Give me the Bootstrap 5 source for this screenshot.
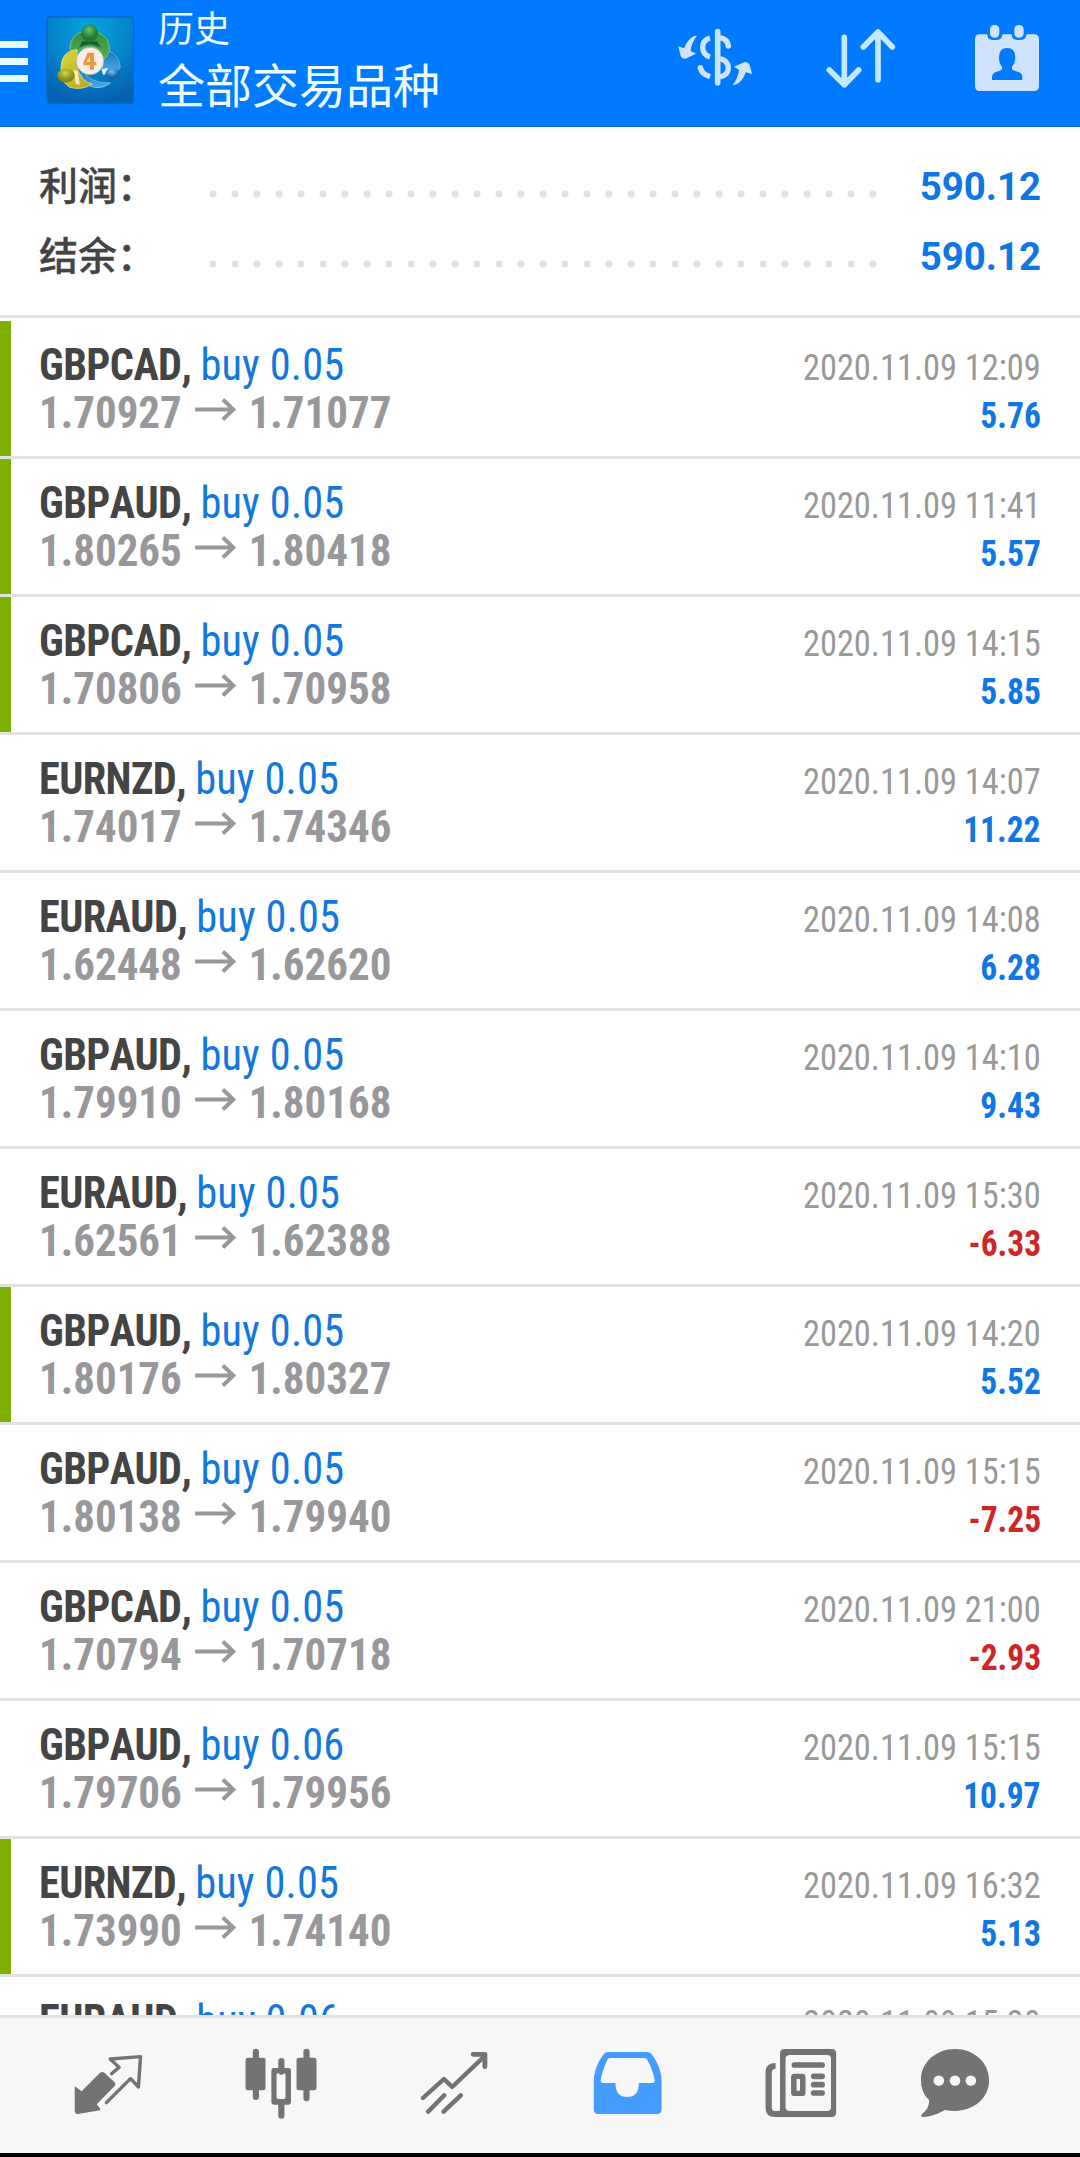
<!DOCTYPE html>
<html lang="zh-CN">
<head>
<meta charset="utf-8">
<meta name="viewport" content="width=device-width, initial-scale=1">
<title>历史</title>
<link rel="stylesheet" href="https://cdn.jsdelivr.net/npm/bootstrap@5.3.0/dist/css/bootstrap.min.css">
<style>
body{height:2157px;overflow:hidden;background:#fff;font-family:Roboto,"Noto Sans CJK SC",sans-serif;color:#444}
.topbar{height:127px;background:#007aff;border-bottom:2px solid #1a6cc4;color:#eefbff}
.burger{width:28px;margin-top:41px}
.burger i{display:block;height:7px;background:#e6fbff;margin-bottom:10px}
.applogo{width:88px;height:88px;margin:16px 0 0 18px}
.titles{margin-left:24px;font-family:"Noto Sans CJK SC",sans-serif}
.t-sub{font-size:36px;line-height:50px;margin-top:1px}
.t-main{font-size:47px;line-height:64px}
.summary{height:191px;border-bottom:3px solid #e2e2e2;padding:23px 39px 0 39px}
.sumline{height:70px}
.sumlabel{width:163px;margin-top:-4px;font:500 39px/70px "Noto Sans CJK SC",sans-serif;-webkit-text-stroke:.3px #444}
.dots{width:682px;height:8px;margin-top:17px;background:radial-gradient(circle at 11px 4px,#e0e0e0 3px,transparent 4px) 0 0/22px 8px repeat-x}
.sumval{font-weight:700;font-size:38.4px;color:#0f76e6;padding-top:4px}
.trades{height:1697px;padding-top:3px}
.trade{height:138px;border-bottom:3px solid #e2e2e2;padding:19.5px 39px 0 39px;font-family:"Roboto Condensed",Roboto,sans-serif;font-stretch:75%}
.won{box-shadow:inset 11px 0 #7fb000}
.tline{height:48px;line-height:48px;white-space:nowrap}
.tline+.tline{height:48.5px;line-height:48.5px}
.tline>:first-child{transform:scaleX(.94);transform-origin:0 0}
.tline>:last-child{transform:scaleX(.93);transform-origin:100% 0}
.sym{font-weight:700;font-size:45px;letter-spacing:-.6px;font-kerning:none}
.side{font-weight:400;color:#1377e0;letter-spacing:.2px}
.tline>.price{font-weight:700;font-size:45px;color:#98989b;transform:scaleX(.955)}
.arrow{width:45px;height:24px;margin:0 12px 7px 13px;vertical-align:baseline}
.when{font-size:37px;color:#999}
.gain,.loss{font-weight:700;font-size:37px;color:#0f76e6}
.tline>.gain,.tline>.loss{transform:scaleX(.905)}
.loss{color:#cc2626}
.tabs{height:138px;background:#f7f7f7;border-top:3px solid #e2e2e2}
.sysline{height:4px;background:#000}
</style>
<script src="https://cdn.jsdelivr.net/npm/bootstrap@5.3.0/dist/js/bootstrap.bundle.min.js"></script>
</head>
<body>
<svg width="0" height="0" class="position-absolute"><symbol id="arr" viewBox="0 0 44 24"><path d="M0 12.500H40M29 2.500L40 12.500L29 22.500" fill="none" stroke="#98989b" stroke-width="4"/></symbol></svg>
<header class="topbar d-flex align-items-start">
<div class="burger"><i></i><i></i><i></i></div>
<svg class="applogo" viewBox="137 46 264 264">
<defs>
<radialGradient id="bg" cx=".5" cy=".15" r=".85"><stop offset="0" stop-color="#08a3dc"/><stop offset=".55" stop-color="#0584cc"/><stop offset="1" stop-color="#0560ae"/></radialGradient>
<linearGradient id="gr" x2="0" y2="1"><stop offset="0" stop-color="#2f8f42"/><stop offset="1" stop-color="#55b04c"/></linearGradient>
<linearGradient id="ye" x2="1" y2="1"><stop offset="0" stop-color="#ded63a"/><stop offset="1" stop-color="#b3a41c"/></linearGradient>
<linearGradient id="bl" x2="0" y2="1"><stop offset="0" stop-color="#1b70b8"/><stop offset="1" stop-color="#4aaee8"/></linearGradient>
<radialGradient id="gb" cx=".45" cy=".3"><stop offset="0" stop-color="#6cc46a"/><stop offset="1" stop-color="#1f7a34"/></radialGradient>
<radialGradient id="yb" cx=".45" cy=".3"><stop offset="0" stop-color="#d0d448"/><stop offset="1" stop-color="#848e12"/></radialGradient>
<radialGradient id="bb" cx=".45" cy=".3"><stop offset="0" stop-color="#7cc8f0"/><stop offset="1" stop-color="#1467ae"/></radialGradient>
</defs>
<rect x="140" y="49" width="260" height="260" rx="10" fill="url(#bg)" stroke="#0b66c0" stroke-width="5"/>
<path d="M304 146Q357 152 360 200Q352 218 306 214Z" fill="url(#bl)" stroke="#6fb8e0" stroke-width="2"/>
<path d="M248 206Q262 248 331 247Q300 270 268 256Q250 246 242 222Z" fill="url(#bl)" stroke="#8fd0ee" stroke-width="2"/>
<path d="M208 146Q212 100 250 92L286 92Q330 108 328 152L308 182Q306 138 268 138Q240 140 226 160Z" fill="url(#gr)" stroke="#8ccb78" stroke-width="2.500"/>
<path d="M182 206Q180 152 230 146L232 204Q244 246 276 250Q244 270 208 260L184 238Z" fill="url(#ye)" stroke="#e6de80" stroke-width="2.500"/>
<path d="M221 208L226 250L238 252L232 212Z" fill="#fff" opacity=".75"/>
<path d="M304 206L322 202L322 220L308 222Z" fill="#e8f6ff"/>
<path d="M236 142Q268 120 302 142L290 122L246 122Z" fill="#1c5a38"/>
<ellipse cx="268" cy="98" rx="24" ry="25" fill="url(#gb)" stroke="#1f7a34" stroke-width="2"/>
<ellipse cx="197" cy="225" rx="26" ry="21" fill="url(#yb)"/>
<ellipse cx="336" cy="219" rx="21" ry="17" fill="url(#bb)"/>
<circle cx="269" cy="181" r="41" fill="#f6efe9" stroke="#b9aa90" stroke-width="2"/>
<path fill-rule="evenodd" d="M262 156H281V184H288V194H281V207H269V194H249V186ZM269 166L259 184H269Z" fill="#f0963c"/>
</svg>
<div class="titles flex-grow-1"><div class="t-sub">历史</div><div class="t-main">全部交易品种</div></div>
<svg width="440" height="125" viewBox="0 0 1320 375" fill="#cfe4fc">
<path d="M171 107Q158 106 144 123Q137 132 132 145L115 139L122 168Q126 178 136 176L168 161L152 153Q154 128 171 107Z"/>
<path d="M278 255Q294 254 306 239Q314 229 317 217L336 222L329 195Q324 184 314 186L282 200L297 209Q294 234 278 255Z"/>
<g fill="none" stroke="#cfe4fc" stroke-width="16"><path d="M233 95V248" stroke="#c6e6ff" stroke-width="17" stroke-linecap="round"/><path d="M210 114Q188 120 188 142Q188 164 210 171M181 202Q184 222 210 230M240 113Q264 118 265 139M240 176Q265 182 265 205Q265 225 240 231"/><g stroke-linecap="round"><path d="M265 137V138M181 203V204"/></g></g>
<g fill="none" stroke="#c6e8ff" stroke-width="17" stroke-linecap="round" stroke-linejoin="round"><path d="M613 112V254M568 210L613 254L656 210M714 239V96M670 141L714 96L757 141"/></g>
<path fill-rule="evenodd" d="M1020 103H1042Q1042 120 1058 120H1070Q1087 120 1087 103H1115Q1115 120 1132 120H1142Q1159 120 1159 103H1182Q1197 103 1197 118V258Q1197 273 1182 273H1020Q1005 273 1005 258V118Q1005 103 1020 103ZM1101 144Q1077 144 1077 172Q1077 192 1086 200V207Q1084 212 1070 215Q1056 219 1056 232V240H1147V232Q1147 219 1133 215Q1118 212 1116 207V200Q1126 190 1126 172Q1126 144 1101 144Z"/>
<rect x="1050" y="75" width="28" height="38" rx="13"/><rect x="1123" y="75" width="28" height="38" rx="13"/>
</svg>
</header>
<section class="summary">
<div class="sumline d-flex align-items-center"><span class="sumlabel">利润：</span><span class="dots"></span><span class="sumval ms-auto">590.12</span></div>
<div class="sumline d-flex align-items-center"><span class="sumlabel">结余：</span><span class="dots"></span><span class="sumval ms-auto">590.12</span></div>
</section>
<main class="trades overflow-hidden">
<div class="trade won"><div class="tline d-flex justify-content-between align-items-baseline"><span class="sym">GBPCAD, <span class="side">buy 0.05</span></span><span class="when">2020.11.09 12:09</span></div><div class="tline d-flex justify-content-between align-items-baseline"><span class="price">1.70927<svg class="arrow"><use href="#arr"/></svg>1.71077</span><span class="gain">5.76</span></div></div>
<div class="trade won"><div class="tline d-flex justify-content-between align-items-baseline"><span class="sym">GBPAUD, <span class="side">buy 0.05</span></span><span class="when">2020.11.09 11:41</span></div><div class="tline d-flex justify-content-between align-items-baseline"><span class="price">1.80265<svg class="arrow"><use href="#arr"/></svg>1.80418</span><span class="gain">5.57</span></div></div>
<div class="trade won"><div class="tline d-flex justify-content-between align-items-baseline"><span class="sym">GBPCAD, <span class="side">buy 0.05</span></span><span class="when">2020.11.09 14:15</span></div><div class="tline d-flex justify-content-between align-items-baseline"><span class="price">1.70806<svg class="arrow"><use href="#arr"/></svg>1.70958</span><span class="gain">5.85</span></div></div>
<div class="trade"><div class="tline d-flex justify-content-between align-items-baseline"><span class="sym">EURNZD, <span class="side">buy 0.05</span></span><span class="when">2020.11.09 14:07</span></div><div class="tline d-flex justify-content-between align-items-baseline"><span class="price">1.74017<svg class="arrow"><use href="#arr"/></svg>1.74346</span><span class="gain">11.22</span></div></div>
<div class="trade"><div class="tline d-flex justify-content-between align-items-baseline"><span class="sym">EURAUD, <span class="side">buy 0.05</span></span><span class="when">2020.11.09 14:08</span></div><div class="tline d-flex justify-content-between align-items-baseline"><span class="price">1.62448<svg class="arrow"><use href="#arr"/></svg>1.62620</span><span class="gain">6.28</span></div></div>
<div class="trade"><div class="tline d-flex justify-content-between align-items-baseline"><span class="sym">GBPAUD, <span class="side">buy 0.05</span></span><span class="when">2020.11.09 14:10</span></div><div class="tline d-flex justify-content-between align-items-baseline"><span class="price">1.79910<svg class="arrow"><use href="#arr"/></svg>1.80168</span><span class="gain">9.43</span></div></div>
<div class="trade"><div class="tline d-flex justify-content-between align-items-baseline"><span class="sym">EURAUD, <span class="side">buy 0.05</span></span><span class="when">2020.11.09 15:30</span></div><div class="tline d-flex justify-content-between align-items-baseline"><span class="price">1.62561<svg class="arrow"><use href="#arr"/></svg>1.62388</span><span class="loss">-6.33</span></div></div>
<div class="trade won"><div class="tline d-flex justify-content-between align-items-baseline"><span class="sym">GBPAUD, <span class="side">buy 0.05</span></span><span class="when">2020.11.09 14:20</span></div><div class="tline d-flex justify-content-between align-items-baseline"><span class="price">1.80176<svg class="arrow"><use href="#arr"/></svg>1.80327</span><span class="gain">5.52</span></div></div>
<div class="trade"><div class="tline d-flex justify-content-between align-items-baseline"><span class="sym">GBPAUD, <span class="side">buy 0.05</span></span><span class="when">2020.11.09 15:15</span></div><div class="tline d-flex justify-content-between align-items-baseline"><span class="price">1.80138<svg class="arrow"><use href="#arr"/></svg>1.79940</span><span class="loss">-7.25</span></div></div>
<div class="trade"><div class="tline d-flex justify-content-between align-items-baseline"><span class="sym">GBPCAD, <span class="side">buy 0.05</span></span><span class="when">2020.11.09 21:00</span></div><div class="tline d-flex justify-content-between align-items-baseline"><span class="price">1.70794<svg class="arrow"><use href="#arr"/></svg>1.70718</span><span class="loss">-2.93</span></div></div>
<div class="trade"><div class="tline d-flex justify-content-between align-items-baseline"><span class="sym">GBPAUD, <span class="side">buy 0.06</span></span><span class="when">2020.11.09 15:15</span></div><div class="tline d-flex justify-content-between align-items-baseline"><span class="price">1.79706<svg class="arrow"><use href="#arr"/></svg>1.79956</span><span class="gain">10.97</span></div></div>
<div class="trade won"><div class="tline d-flex justify-content-between align-items-baseline"><span class="sym">EURNZD, <span class="side">buy 0.05</span></span><span class="when">2020.11.09 16:32</span></div><div class="tline d-flex justify-content-between align-items-baseline"><span class="price">1.73990<svg class="arrow"><use href="#arr"/></svg>1.74140</span><span class="gain">5.13</span></div></div>
<div class="trade"><div class="tline d-flex justify-content-between align-items-baseline"><span class="sym">EURAUD, <span class="side">buy 0.06</span></span><span class="when">2020.11.09 15:30</span></div></div>
</main>
<nav class="tabs d-flex">
<svg width="540" height="135" viewBox="0 114 1568 405" preserveAspectRatio="none" fill="#737373">
<path d="M217 319L237 334L290 279Q297 273 304 279L334 308Q337 313 333 318L281 373L291 386V391L226 402Q217 402 217 394Z"/>
<path d="M324 281L346 262L320 237L408 230L402 321L379 296L309 368" fill="none" stroke="#737373" stroke-width="10" stroke-linejoin="round" stroke-linecap="round"/>
<path d="M743 215V351M890 215V355M817 243V275M817 367V407" stroke="#737373" stroke-width="18" stroke-linecap="round"/>
<rect x="713" y="233" width="58" height="98" rx="7"/><rect x="861" y="233" width="58" height="98" rx="7"/>
<path fill-rule="evenodd" d="M795 264H838Q845 264 845 271V367Q845 374 838 374H795Q788 374 788 367V271Q788 264 795 264ZM808 279Q803 279 803 286V350Q803 357 808 357H824Q829 357 829 350V286Q829 279 824 279Z"/>
<path d="M1228 354L1289 297L1313 321L1405 230M1243 395L1290 346M1288 395L1338 346" fill="none" stroke="#737373" stroke-width="13" stroke-linecap="round" stroke-linejoin="round"/><path d="M1374 223H1408V260" fill="none" stroke="#737373" stroke-width="14" stroke-linecap="round" stroke-linejoin="round"/>
</svg>
<svg width="540" height="135" viewBox="0 114 1568 405" preserveAspectRatio="none" fill="#737373">
<path fill="#459cff" fill-rule="evenodd" d="M197 216H312Q320 216 326 225Q353 264 353 304V388Q353 402 340 402H169Q156 402 156 388V304Q156 264 183 225Q189 216 197 216ZM205 234Q198 234 195 240Q180 276 176 300Q175 309 184 309H219Q219 351 253 351Q287 351 287 309H325Q334 309 333 300Q328 271 312 240Q309 234 302 234Z"/>
<path fill-rule="evenodd" d="M710 207H847Q860 207 860 220V397Q860 411 847 411H682Q655 411 655 384V275Q655 249 684 249V266Q673 266 673 277V382Q673 393 681 393H694Q697 393 697 388V220Q697 207 710 207ZM726 225Q713 225 713 236V382Q713 393 726 393H833Q845 393 845 382V236Q845 225 833 225Z"/>
<path d="M739 255H819M795 289H819M795 314H819M795 339H819" stroke="#737373" stroke-width="17" stroke-linecap="round"/>
<rect x="737" y="289" width="26" height="51" rx="2" fill="none" stroke="#737373" stroke-width="16" stroke-linejoin="round"/>
<path d="M1205 207C1260 207 1304 247 1304 301C1304 354 1260 393 1205 393Q1188 393 1175 390Q1145 409 1114 411Q1103 411 1109 403Q1131 385 1130 361Q1106 338 1106 300C1106 247 1150 207 1205 207Z"/>
<g fill="#f7f7f7"><circle cx="1158" cy="302" r="15.500"/><circle cx="1205" cy="302" r="15.500"/><circle cx="1251" cy="302" r="15.500"/></g>
</svg>
</nav>
<div class="sysline"></div>
</body>
</html>
